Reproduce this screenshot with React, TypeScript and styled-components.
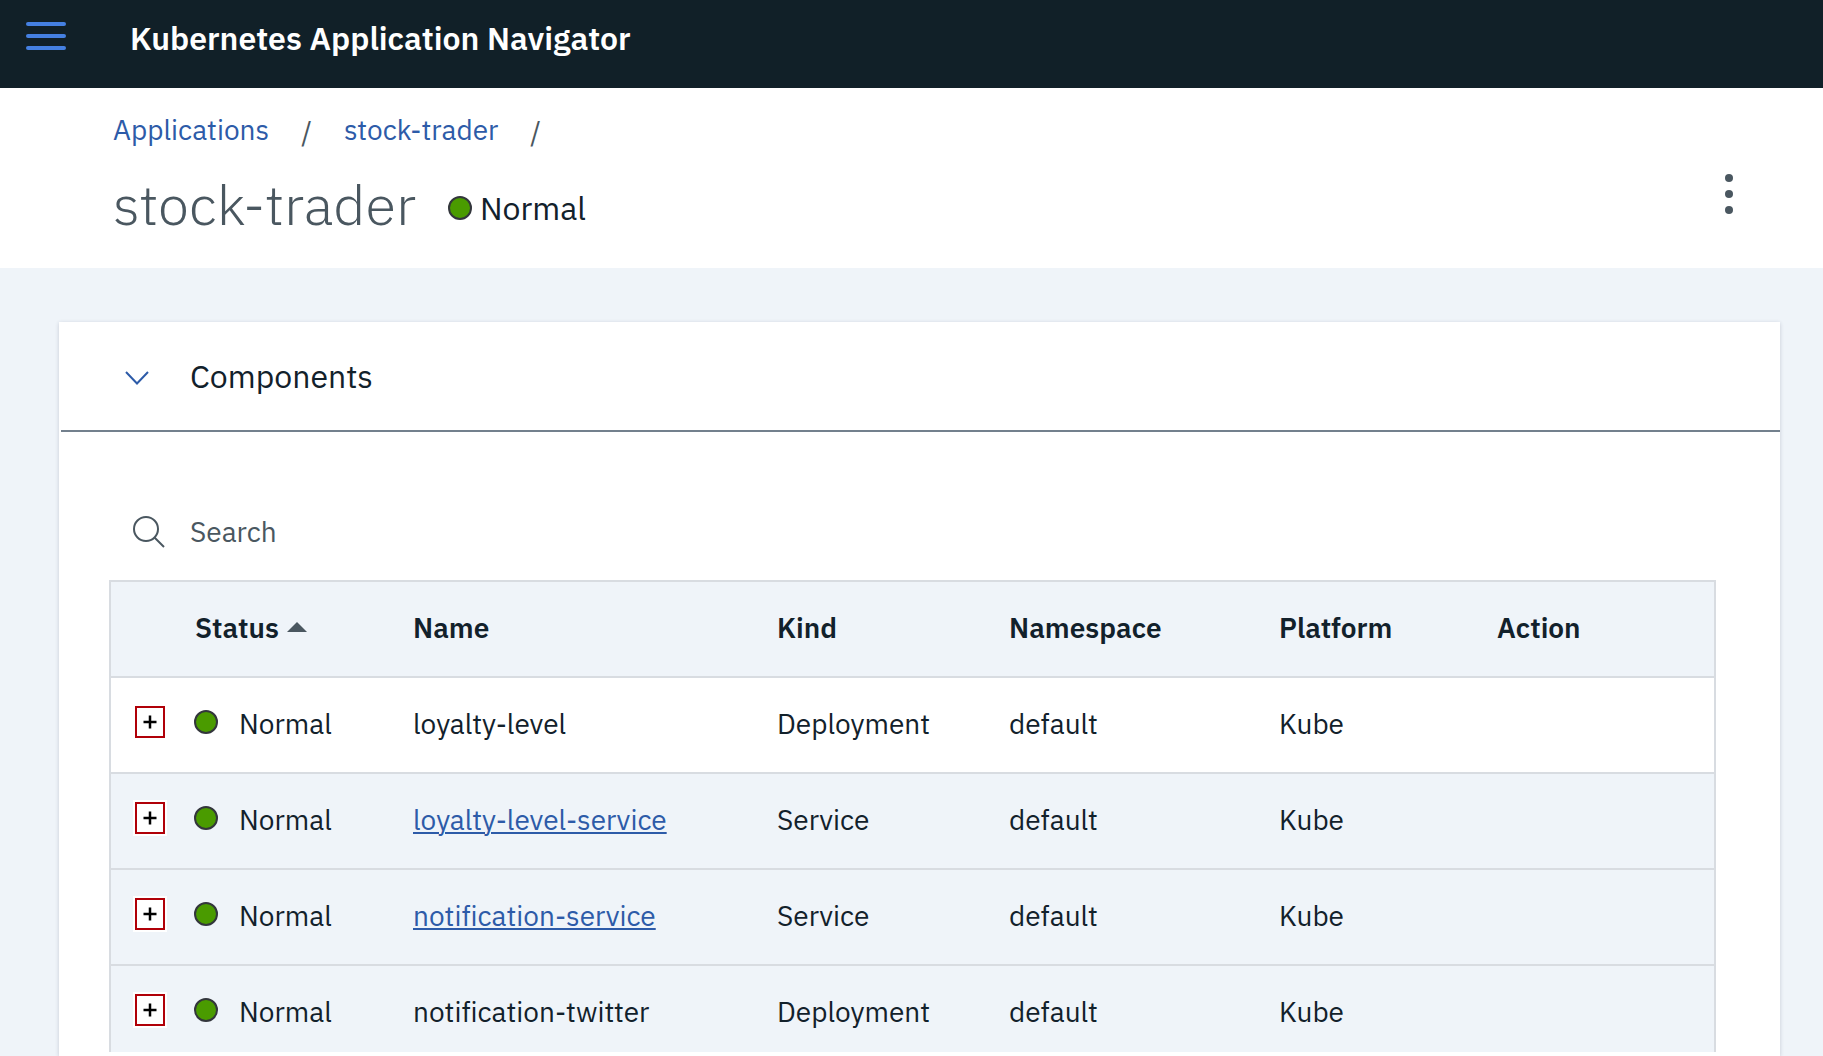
import React from "react";
import styled, { createGlobalStyle } from "styled-components";

const color = {
  ink: "#12212b",
  slate: "#4a5760",
  link: "#2d5ba8",
  surface: "#eff4f9",
  line: "#d8dce1",
  green: "#4a9b00",
};

const GlobalStyle = createGlobalStyle`
  *, *::before, *::after { box-sizing: border-box; }
  body {
    margin: 0;
    background: ${color.surface};
    color: ${color.ink};
    font-family: "IBM Plex Sans", "Noto Sans", "Open Sans", sans-serif;
    font-size: 28px;
    line-height: 36px;
  }
  button, input { font: inherit; color: inherit; }
  button { border: 0; padding: 0; background: none; cursor: pointer; }
  svg { display: block; }
`;

const Page = styled.div`
  display: flex;
  flex-direction: column;
  height: 100vh;
  overflow: hidden;
`;

const TopBar = styled.header`
  display: flex;
  align-items: flex-start;
  gap: 62px;
  flex: none;
  height: 88px;
  padding: 18px 24px;
  background: #112028;
  color: #fff;
`;

const Brand = styled.span`
  font-size: 32px;
  line-height: 40px;
  font-weight: 600;
`;

const MenuButton = styled.button`
  padding: 4px 2px;
`;

const PageHeader = styled.section`
  display: flex;
  justify-content: space-between;
  flex: none;
  height: 180px;
  padding: 24px 82px 0 113px;
  background: #fff;
`;

const Crumbs = styled.nav`
  display: flex;
  gap: 32px;
`;

const Link = styled.a<{ $underlined?: boolean }>`
  color: ${color.link};
  text-decoration: ${(p) => (p.$underlined ? "underline" : "none")};
  text-decoration-thickness: 2px;
  text-underline-offset: 2px;
`;

const Slash = styled.span`
  color: ${color.slate};
  padding-top: 2px;
`;

const TitleRow = styled.div`
  display: flex;
  align-items: flex-start;
  gap: 32px;
  margin-top: 14px;
`;

const Title = styled.h1`
  margin: 0;
  color: ${color.slate};
  font-size: 56px;
  line-height: 80px;
  font-weight: 300;
`;

const Health = styled.span`
  display: flex;
  align-items: center;
  gap: 8px;
  padding-top: 24px;
  font-size: 32px;
  line-height: 40px;
`;

const Dot = styled.span`
  flex: none;
  width: 24px;
  height: 24px;
  border: 2px solid #33363c;
  border-radius: 50%;
  background: ${color.green};
`;

const KebabButton = styled.button`
  align-self: flex-start;
  margin-top: 58px;
  padding: 4px 8px;
`;

const Main = styled.main`
  display: flex;
  flex: 1;
  min-height: 0;
  padding: 54px 43px 0 59px;
`;

const Card = styled.section`
  display: flex;
  flex-direction: column;
  flex: 1;
  min-width: 0;
  padding-bottom: 4px;
  background: #fff;
  box-shadow: 0 1px 4px rgba(30, 40, 70, 0.2);
`;

const CardHeading = styled.h2`
  flex: none;
  margin: 0 0 0 2px;
  border-bottom: 2px solid #73808d;
  font-size: 32px;
  line-height: 40px;
  font-weight: 400;
`;

const CardToggle = styled.button`
  display: flex;
  align-items: center;
  gap: 41px;
  width: 100%;
  padding: 34px 64px;
  text-align: left;
`;

const Chevron = styled.svg`
  margin-top: 4px;
`;

const SearchField = styled.label`
  display: flex;
  align-items: center;
  gap: 25px;
  flex: none;
  margin: 82px 64px 30px 74px;
`;

const SearchInput = styled.input`
  flex: 1;
  min-width: 0;
  height: 36px;
  padding: 0;
  border: 0;
  outline: 0;
  background: transparent;
  &::placeholder { color: ${color.slate}; opacity: 1; }
`;

const TableFrame = styled.div`
  flex: 1;
  min-height: 0;
  margin: 0 64px 0 50px;
  overflow: hidden;
  border: 2px solid ${color.line};
  border-bottom: 0;
  background: ${color.surface};
`;

const Table = styled.table`
  width: 100%;
  table-layout: fixed;
  border-collapse: separate;
  border-spacing: 0;
`;

const Col = styled.col<{ $width?: number }>`
  width: ${(p) => (p.$width ? `${p.$width}px` : "auto")};
`;

const HeadCell = styled.th`
  height: 96px;
  padding: 28px 0 30px;
  border-bottom: 2px solid ${color.line};
  vertical-align: top;
  text-align: left;
  font-weight: 600;
`;

const Row = styled.tr<{ $plain?: boolean }>`
  background: ${(p) => (p.$plain ? "#fff" : color.surface)};
`;

const Cell = styled.td`
  height: 96px;
  padding: 28px 0 30px;
  border-bottom: 2px solid ${color.line};
  vertical-align: top;
  font-variant-ligatures: none;
`;

const ExpandCell = styled(Cell)`
  padding: 26px 0 0 22px;
`;

const SortButton = styled.button`
  display: flex;
  align-items: center;
  gap: 8px;
  font-weight: 600;
`;

const Status = styled.span`
  display: flex;
  align-items: center;
  gap: 21px;
  margin-left: -1px;
`;

const StatusDot = styled(Dot)`
  margin-bottom: 4px;
`;

const ExpandButton = styled.button`
  display: flex;
  align-items: center;
  justify-content: center;
  width: 34px;
  height: 36px;
  border: 2px solid #fff;
  background: #fff;
  outline: 2px solid #b00008;
  outline-offset: -4px;
`;

const columns = [
  { label: "Name", width: 364 },
  { label: "Kind", width: 232 },
  { label: "Namespace", width: 270 },
  { label: "Platform", width: 218 },
  { label: "Action" },
];

const rows = [
  { name: "loyalty-level", kind: "Deployment", linked: false },
  { name: "loyalty-level-service", kind: "Service", linked: true },
  { name: "notification-service", kind: "Service", linked: true },
  { name: "notification-twitter", kind: "Deployment", linked: false },
];

export default function App() {
  return (
    <>
      <GlobalStyle />
      <Page>
        <TopBar>
          <MenuButton aria-label="Menu">
            <svg width="40" height="28" viewBox="0 0 40 28" fill="#4580e2">
              <rect y="0" width="40" height="4" rx="2" />
              <rect y="12" width="40" height="4" rx="2" />
              <rect y="24" width="40" height="4" rx="2" />
            </svg>
          </MenuButton>
          <Brand>Kubernetes Application Navigator</Brand>
        </TopBar>

        <PageHeader>
          <div>
            <Crumbs aria-label="Breadcrumb">
              <Link href="#applications">Applications</Link>
              <Slash>/</Slash>
              <Link href="#stock-trader">stock-trader</Link>
              <Slash>/</Slash>
            </Crumbs>
            <TitleRow>
              <Title>stock-trader</Title>
              <Health>
                <Dot />
                Normal
              </Health>
            </TitleRow>
          </div>
          <KebabButton aria-label="More actions">
            <svg width="8" height="40" viewBox="0 0 8 40" fill={color.slate}>
              <circle cx="4" cy="4" r="4" />
              <circle cx="4" cy="20" r="4" />
              <circle cx="4" cy="36" r="4" />
            </svg>
          </KebabButton>
        </PageHeader>

        <Main>
          <Card>
            <CardHeading>
              <CardToggle aria-expanded="true">
                <Chevron width="24" height="14" viewBox="0 0 24 14" fill="none" stroke={color.link} strokeWidth="2">
                  <path d="M1 1l11 11.500L23 1" />
                </Chevron>
                Components
              </CardToggle>
            </CardHeading>

            <SearchField>
              <svg width="32" height="32" viewBox="0 0 32 32" fill="none" stroke={color.slate} strokeWidth="2">
                <circle cx="13" cy="13" r="12" />
                <path d="M21.500 21.500L31 31" />
              </svg>
              <SearchInput type="search" placeholder="Search" aria-label="Search" />
            </SearchField>

            <TableFrame>
              <Table>
                <colgroup>
                  <Col $width={84} />
                  <Col $width={218} />
                  {columns.map((c) => (
                    <Col key={c.label} $width={c.width} />
                  ))}
                </colgroup>
                <thead>
                  <tr>
                    <HeadCell aria-label="Expand" />
                    <HeadCell aria-sort="ascending">
                      <SortButton>
                        Status
                        <svg width="20" height="12" viewBox="0 0 20 12" fill={color.slate}>
                          <path d="M10 0L20 10H0z" />
                        </svg>
                      </SortButton>
                    </HeadCell>
                    {columns.map((c) => (
                      <HeadCell key={c.label}>{c.label}</HeadCell>
                    ))}
                  </tr>
                </thead>
                <tbody>
                  {rows.map((row, i) => (
                    <Row key={row.name} $plain={i === 0}>
                      <ExpandCell>
                        <ExpandButton aria-label={`Expand ${row.name}`}>
                          <svg width="14" height="14" viewBox="0 0 14 14" stroke="#000" strokeWidth="2.5">
                            <path d="M7 0.500v13M0.500 7h13" />
                          </svg>
                        </ExpandButton>
                      </ExpandCell>
                      <Cell>
                        <Status>
                          <StatusDot />
                          Normal
                        </Status>
                      </Cell>
                      <Cell>
                        {row.linked ? (
                          <Link $underlined href={`#${row.name}`}>
                            {row.name}
                          </Link>
                        ) : (
                          row.name
                        )}
                      </Cell>
                      <Cell>{row.kind}</Cell>
                      <Cell>default</Cell>
                      <Cell>Kube</Cell>
                      <Cell />
                    </Row>
                  ))}
                </tbody>
              </Table>
            </TableFrame>
          </Card>
        </Main>
      </Page>
    </>
  );
}
